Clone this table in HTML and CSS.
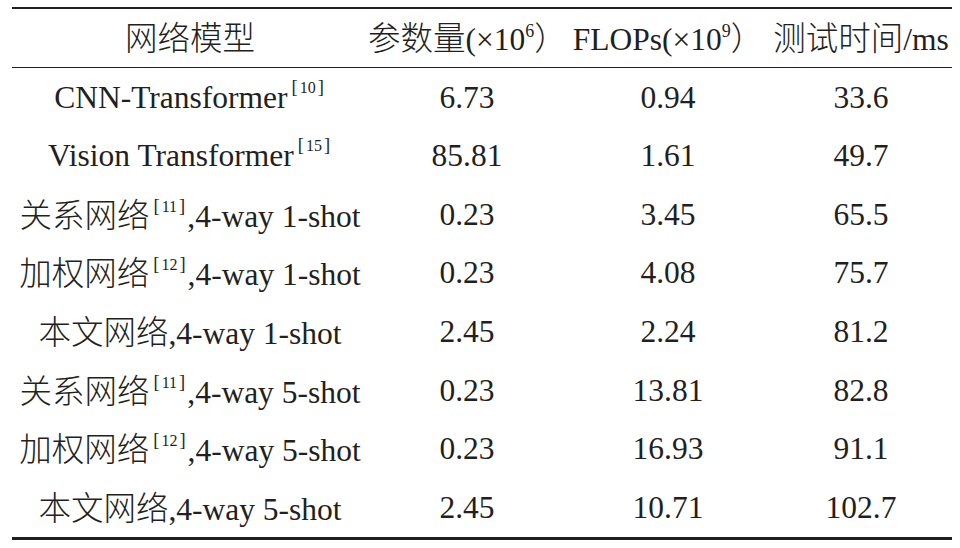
FILE: index.html
```html
<!DOCTYPE html>
<html lang="zh-CN">
<head>
<meta charset="utf-8">
<title>网络模型对比</title>
<link rel="stylesheet" href="styles.css">
</head>
<body>
<table class="tbl">
  <colgroup>
    <col class="c1"><col class="c2"><col class="c3"><col class="c4">
  </colgroup>
  <thead>
    <tr>
      <th><span class="zh">网络模型</span></th>
      <th><span class="zh">参数量</span>(×10<sup class="exp">6</sup><span class="zh">）</span></th>
      <th>FLOPs(×10<sup class="exp">9</sup><span class="zh">）</span></th>
      <th><span class="zh">测试时间</span>/ms</th>
    </tr>
  </thead>
  <tbody>
    <tr><td>CNN-Transformer<sup class="ref"><span class="br">[</span>10<span class="br">]</span></sup></td><td>6.73</td><td>0.94</td><td>33.6</td></tr>
    <tr><td>Vision Transformer<sup class="ref"><span class="br">[</span>15<span class="br">]</span></sup></td><td>85.81</td><td>1.61</td><td>49.7</td></tr>
    <tr><td><span class="zh">关系网络</span><sup class="ref"><span class="br">[</span>11<span class="br">]</span></sup>,4-way 1-shot</td><td>0.23</td><td>3.45</td><td>65.5</td></tr>
    <tr><td><span class="zh">加权网络</span><sup class="ref"><span class="br">[</span>12<span class="br">]</span></sup>,4-way 1-shot</td><td>0.23</td><td>4.08</td><td>75.7</td></tr>
    <tr><td><span class="zh">本文网络</span>,4-way 1-shot</td><td>2.45</td><td>2.24</td><td>81.2</td></tr>
    <tr><td><span class="zh">关系网络</span><sup class="ref"><span class="br">[</span>11<span class="br">]</span></sup>,4-way 5-shot</td><td>0.23</td><td>13.81</td><td>82.8</td></tr>
    <tr><td><span class="zh">加权网络</span><sup class="ref"><span class="br">[</span>12<span class="br">]</span></sup>,4-way 5-shot</td><td>0.23</td><td>16.93</td><td>91.1</td></tr>
    <tr><td><span class="zh">本文网络</span>,4-way 5-shot</td><td>2.45</td><td>10.71</td><td>102.7</td></tr>
  </tbody>
</table>
</body>
</html>
```
FILE: styles.css
```css
html, body {
  margin: 0;
  padding: 0;
  background: #ffffff;
}
body {
  color: #231f20;
  font-family: "Liberation Serif", "Noto Sans CJK SC", serif;
  font-size: 31.5px;
}
.tbl {
  border-collapse: collapse;
  margin: 7px 0 0 12px;
  width: 940px;
  table-layout: fixed;
  border-top: 2px solid #231f20;
  border-bottom: 3px solid #231f20;
}
.c1 { width: 356px; }
.c2 { width: 198px; }
.c3 { width: 204px; }
.c4 { width: 182px; }
.tbl thead tr {
  border-bottom: 1.5px solid #231f20;
}
.tbl th,
.tbl td {
  padding: 0;
  text-align: center;
  vertical-align: middle;
  white-space: nowrap;
  font-weight: 400;
  line-height: 1;
}
.tbl th {
  height: 58px;
}
.tbl td {
  height: 58.6px;
}
.zh {
  font-family: "Noto Sans CJK SC", sans-serif;
  font-weight: 300;
  font-size: 32.5px;
}
.exp {
  font-size: 18px;
  line-height: 0;
  vertical-align: 13px;
}
.ref {
  font-size: 16px;
  line-height: 0;
  vertical-align: 15px;
  padding-left: 2px;
}
.ref .br {
  font-size: 18.5px;
  vertical-align: 0;
  padding: 0 2px;
}
```
